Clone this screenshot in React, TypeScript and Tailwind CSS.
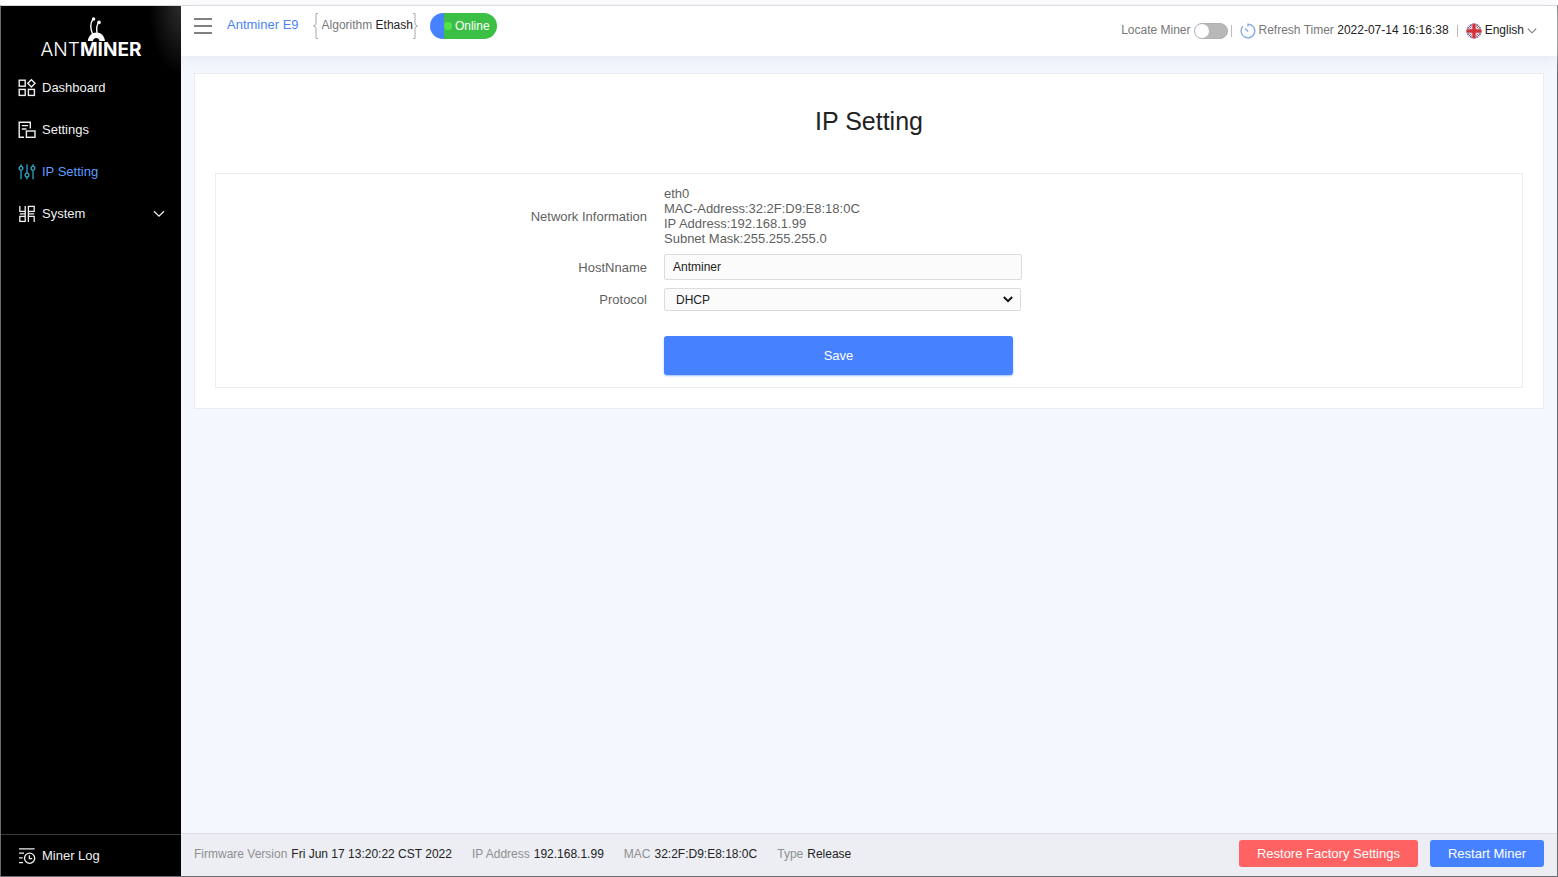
import React, { useState } from 'react';

type IconProps = { className?: string };

const DashboardIcon: React.FC<IconProps> = ({ className }) => (
    <svg className={className} width="18" height="18" viewBox="0 0 18 18" fill="none" stroke="currentColor" strokeWidth="1.4" aria-hidden="true">
        <rect x="1.2" y="1.2" width="6" height="6" />
        <rect x="1.2" y="10.4" width="6" height="6" />
        <rect x="10.4" y="10.4" width="6" height="6" />
        <path d="M13.4 0.7 L17 4.3 L13.4 7.9 L9.8 4.3 Z" />
    </svg>
);

const SettingsIcon: React.FC<IconProps> = ({ className }) => (
    <svg className={className} width="18" height="18" viewBox="0 0 18 18" fill="none" stroke="currentColor" strokeWidth="1.4" aria-hidden="true">
        <path d="M6 16.3 H1.2 V1.2 H12.3 V7.6" />
        <path d="M3.8 4.6 H10 M3.8 8 H8.4" />
        <rect x="8.4" y="10" width="8.6" height="6.3" />
    </svg>
);

const SlidersIcon: React.FC<IconProps> = ({ className }) => (
    <svg className={className} width="18" height="18" viewBox="0 0 18 18" fill="none" stroke="currentColor" strokeWidth="1.3" aria-hidden="true">
        <path d="M3 1.2 V3.2 M3 7.2 V16.2 M9 1.2 V10 M9 14 V16.2 M15 1.2 V3.2 M15 7.2 V16.2" />
        <circle cx="3" cy="5.2" r="1.9" />
        <circle cx="9" cy="12" r="1.9" />
        <circle cx="15" cy="5.2" r="1.9" />
    </svg>
);

const SystemIcon: React.FC<IconProps> = ({ className }) => (
    <svg className={className} width="18" height="18" viewBox="0 0 18 18" fill="none" stroke="currentColor" strokeWidth="1.3" aria-hidden="true">
        <path d="M1.8 1 V6.4 H7.2 V1" />
        <rect x="10.4" y="1.4" width="5.8" height="5" />
        <rect x="1.8" y="11.4" width="5.4" height="5" />
        <path d="M10.4 17 V11.4 H16.2 V17" />
        <path d="M7.2 6.4 V8.9 H1.8 M7.2 8.9 V11.4 M10.4 6.4 V8.9 H16.2 M10.4 8.9 V11.4" />
    </svg>
);

const LogIcon: React.FC<IconProps> = ({ className }) => (
    <svg className={className} width="18" height="18" viewBox="0 0 18 18" fill="none" stroke="currentColor" strokeWidth="1.3" aria-hidden="true">
        <path d="M1 1.8 H16.6 M1 6.2 H6 M1 10.8 H4.6 M1 15.6 H5" />
        <circle cx="11.6" cy="11.2" r="5.1" />
        <path d="M11.4 8.2 V11.6 H14.2" />
    </svg>
);

const ChevronIcon: React.FC<IconProps> = ({ className }) => (
    <svg className={className} viewBox="0 0 12 8" fill="none" stroke="currentColor" strokeWidth="1.3" aria-hidden="true">
        <path d="M1 1.2 L6 6.2 L11 1.2" />
    </svg>
);

const TimerIcon = () => (
    <svg width="16" height="16" viewBox="0 0 16 16" fill="none" stroke="#86a9e6" strokeWidth="1.4" aria-hidden="true">
        <path d="M8 3.4 V1.2 A6.8 6.8 0 1 1 3 3.3" />
        <path d="M5 5.4 L8.2 8.6" />
    </svg>
);

const FlagIcon = () => (
    <svg width="16" height="16" viewBox="0 0 16 16" aria-hidden="true">
        <clipPath id="flag-round">
            <circle cx="8" cy="8" r="7.6" />
        </clipPath>
        <g clipPath="url(#flag-round)">
            <rect width="16" height="16" fill="#3c4f8c" />
            <path d="M0 0 L16 16 M16 0 L0 16" stroke="#f3eef0" strokeWidth="2.4" />
            <path d="M0 0 L16 16 M16 0 L0 16" stroke="#cf3a44" strokeWidth="1" />
            <path d="M8 0 V16 M0 8 H16" stroke="#f3eef0" strokeWidth="5" />
            <path d="M8 0 V16 M0 8 H16" stroke="#d3303c" strokeWidth="3.4" />
        </g>
    </svg>
);

const BraceIcon: React.FC<IconProps> = ({ className }) => (
    <svg className={className} width="5" height="26" viewBox="0 0 5 26" fill="none" stroke="#a9a9a9" aria-hidden="true">
        <path d="M5 0.5 H3 V11.5 L0.5 13 L3 14.5 V25.5 H5" />
    </svg>
);

const Logo = () => (
    <div className="flex flex-col items-center pt-[11px] text-white">
        <svg className="ml-3" width="20" height="25" viewBox="0 0 20 25" aria-hidden="true">
            <path d="M0.8 24 C1.6 18.8 5 15.6 9.4 15.6 C14 15.6 17.4 18.8 18 24 L12.4 24 C12.2 22 10.9 21 9.3 21 C7.6 21 6.2 22 6 24 Z" fill="currentColor" />
            <path d="M5.8 17.5 C3.2 12 3.2 6 6.2 1.8 M10.2 16.6 C9.2 12.4 9.4 8.6 11.6 5.4" fill="none" stroke="currentColor" strokeWidth="1.4" />
            <circle cx="6.6" cy="2" r="1.7" fill="currentColor" />
            <circle cx="12" cy="5.4" r="1.8" fill="currentColor" />
        </svg>
        <div className="font-['Inter',sans-serif] text-[19px] leading-4">
            <span className="font-light">ANT</span>
            <span className="font-bold">MINER</span>
        </div>
    </div>
);

const navItems = [
    { label: 'Dashboard', Icon: DashboardIcon },
    { label: 'Settings', Icon: SettingsIcon },
    { label: 'IP Setting', Icon: SlidersIcon, active: true },
    { label: 'System', Icon: SystemIcon, expandable: true },
];

const footerItems = [
    { label: 'Firmware Version', value: 'Fri Jun 17 13:20:22 CST 2022' },
    { label: 'IP Address', value: '192.168.1.99' },
    { label: 'MAC', value: '32:2F:D9:E8:18:0C' },
    { label: 'Type', value: 'Release' },
];

const Sidebar = () => (
    <aside className="relative w-[180px] shrink-0 flex flex-col bg-black bg-[radial-gradient(32px_70px_at_top_right,#2c2c2c_0px,#000_100%)] text-[13px] text-[#f0f0f0]">
        <Logo />
        <nav className="flex-1 pt-[9px]">
            {navItems.map(({ label, Icon, active, expandable }) => (
                <a key={label} href="#" className={`flex items-center h-[42px] pl-[17px] pr-4 gap-1.5 ${active ? 'text-[#5c9dff]' : ''}`}>
                    <Icon className={active ? 'text-[#2fa3c7]' : ''} />
                    {label}
                    {expandable && <ChevronIcon className="ml-auto w-3 h-2" />}
                </a>
            ))}
        </nav>
        <a href="#" className="flex items-center h-[42px] pl-[17px] pr-4 gap-1.5 border-t border-[#3a3a3a]">
            <LogIcon />
            Miner Log
        </a>
    </aside>
);

const Header = () => {
    const [locating, setLocating] = useState(false);

    return (
        <header className="h-[50px] flex justify-between bg-white shadow-[0_2px_14px_#e4e6f0] text-xs text-[#777]">
            <div className="flex items-center h-10">
                <button aria-label="Toggle menu" className="ml-3 p-px text-[#808080]">
                    <svg width="18" height="16" viewBox="0 0 18 16" stroke="currentColor" strokeWidth="2" aria-hidden="true">
                        <path d="M0 1 H18 M0 8 H18 M0 15 H18" />
                    </svg>
                </button>
                <a href="#" className="ml-3.5 pb-0.5 text-[13px] text-[#4a83f5]">Antminer E9</a>
                <div className="ml-3.5 flex items-center">
                    <BraceIcon className="mr-1" />
                    <span className="pb-0.5">Algorithm <span className="text-[#222]">Ethash</span></span>
                    <BraceIcon className="-scale-x-100" />
                </div>
                <div className="ml-3 w-[67px] h-[26px] pl-3.5 flex items-center gap-[3px] rounded-full bg-[linear-gradient(90deg,#4682ff_14px,#3cbf45_14px)] text-white">
                    <span className="size-2 rounded-full bg-[#55e34d]"></span>
                    Online
                </div>
            </div>
            <div className="flex items-center pr-5">
                <label htmlFor="locate" className="pb-0.5">Locate Miner</label>
                <input
                    id="locate"
                    type="checkbox"
                    role="switch"
                    checked={locating}
                    onChange={(e) => setLocating(e.target.checked)}
                    className="ml-[3px] w-[34px] h-4 p-px appearance-none rounded-full bg-[#b8b8b8] checked:bg-[#4682ff] border border-[#b0b0b0] before:block before:size-3 before:rounded-full before:bg-white before:ring-1 before:ring-white checked:before:ml-4"
                />
                <span className="ml-[3px] mr-2 w-px h-3 bg-[#bbb]"></span>
                <TimerIcon />
                <span className="ml-[3px] pb-0.5">Refresh Timer <span className="text-[#222]">2022-07-14 16:16:38</span></span>
                <span className="mx-2 w-px h-3 bg-[#bbb]"></span>
                <button className="flex items-center gap-[3px] text-[#222]">
                    <FlagIcon />
                    <span className="pb-0.5">English</span>
                    <ChevronIcon className="w-2.5 h-2 text-[#777]" />
                </button>
            </div>
        </header>
    );
};

const IpSetting = () => (
    <section className="ml-[13px] mr-[13px] mt-[17px] px-5 pb-5 bg-white border border-[#e9edf3]">
        <h1 className="pt-[31px] pb-9 text-center text-[25px] leading-8 text-[#222]">IP Setting</h1>
        <form onSubmit={(e) => e.preventDefault()} className="grid grid-cols-[1fr_2fr] gap-x-[17px] items-center pl-0.5 pt-3 pb-3 border border-[#ededf0] text-[13px] leading-[15px] text-[#5f5f5f]">
            <div className="text-right">Network Information</div>
            <div>
                <p>eth0</p>
                <p>MAC-Address:32:2F:D9:E8:18:0C</p>
                <p>IP Address:192.168.1.99</p>
                <p>Subnet Mask:255.255.255.0</p>
            </div>
            <label htmlFor="hostname" className="mt-2 text-right">HostNname</label>
            <input
                id="hostname"
                defaultValue="Antminer"
                className="mt-2 w-[358px] h-[26px] px-2 bg-[#fbfbfb] border border-[#dcdcdc] rounded-xs text-xs text-[#222]"
            />
            <label htmlFor="protocol" className="mt-2 text-right">Protocol</label>
            <div className="mt-2 w-[357px] relative">
                <select id="protocol" className="w-full h-[23px] pl-[11px] appearance-none bg-[#fbfbfb] border border-[#dcdcdc] rounded-xs text-xs text-[#222]">
                    <option>DHCP</option>
                    <option>Static</option>
                </select>
                <svg className="absolute right-2 top-2 pointer-events-none" width="10" height="7" viewBox="0 0 10 7" fill="none" stroke="#111" strokeWidth="2" aria-hidden="true">
                    <path d="M0.8 1 L5 5.2 L9.2 1" />
                </svg>
            </div>
            <button className="col-start-2 mt-[25px] w-[349px] h-[39px] rounded-[3px] bg-[#4682ff] text-white shadow-[0_1px_2px_#9dbcff]">Save</button>
        </form>
    </section>
);

const Footer = () => (
    <footer className="h-[43px] flex items-center justify-between pl-[13px] pr-[13px] pb-[3px] bg-[#eceef3] border-t border-[#dcdee3] text-xs">
        <dl className="flex gap-5">
            {footerItems.map(({ label, value }) => (
                <div key={label} className="flex gap-1">
                    <dt className="text-[#8f8f8f]">{label}</dt>
                    <dd className="text-[#222]">{value}</dd>
                </div>
            ))}
        </dl>
        <div className="flex gap-3 text-[13px] text-white">
            <button className="h-[27px] px-[18px] rounded-[3px] bg-[#ff6262]">Restore Factory Settings</button>
            <button className="h-[27px] px-[18px] rounded-[3px] bg-[#4682ff]">Restart Miner</button>
        </div>
    </footer>
);

const App: React.FC = () => {
    return (
        <div className="min-h-screen flex flex-col pt-[5px] bg-white font-['Liberation_Sans',Arial,sans-serif]">
            <div className="flex-1 flex border border-t-[#d8d8d8] border-[#6b6b72]">
                <Sidebar />
                <div className="flex-1 min-w-0 flex flex-col bg-[#f4f7fd]">
                    <Header />
                    <main className="flex-1">
                        <IpSetting />
                    </main>
                    <Footer />
                </div>
            </div>
        </div>
    );
};

export default App;
